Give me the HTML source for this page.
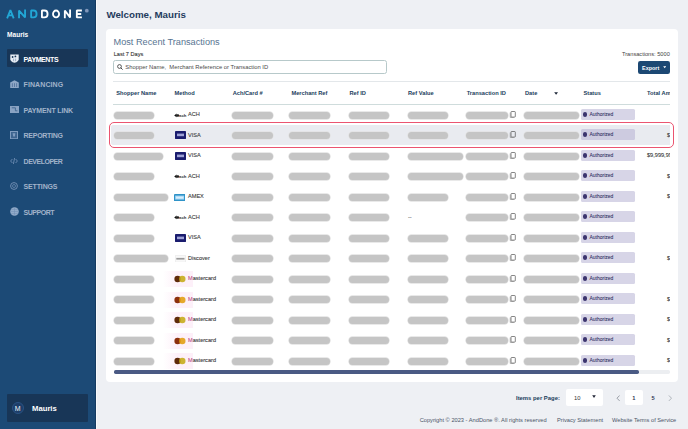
<!DOCTYPE html>
<html><head><meta charset="utf-8">
<style>
*{margin:0;padding:0;box-sizing:border-box}
html,body{width:688px;height:429px;overflow:hidden;background:#eef0f4;font-family:"Liberation Sans",sans-serif}
.a{position:absolute;white-space:pre;line-height:1}
#side{position:absolute;left:0;top:0;width:95.5px;height:429px;background:#1c4a76;border-right:1px solid #153b61}
#sidestrip{position:absolute;left:95.5px;top:0;width:1.8px;height:429px;background:#f9fafc}
.logo{position:absolute;left:6px;top:8.5px;font-size:12.2px;font-weight:bold;letter-spacing:2.8px;line-height:1;white-space:pre;-webkit-text-stroke:0.35px currentColor}
.logo .c{color:#23a8d8} .logo .w{color:#ffffff}
.reg{position:absolute;left:85px;top:9px;width:4px;height:4px;border-radius:50%;background:#7c93b8}
.nav{position:absolute;left:23.6px;font-size:7px;font-weight:bold;letter-spacing:-0.1px;line-height:1;white-space:pre;color:#a1b3ca}
.nav.act{color:#fff}
.navic{position:absolute;left:10px}
#act{position:absolute;left:7px;top:49px;width:81px;height:18.4px;background:#183657;border-radius:1px}
#user{position:absolute;left:6.8px;top:393.6px;width:81.4px;height:28px;background:#183657;border-radius:1px}
#card{position:absolute;left:105.5px;top:29px;width:572.3px;height:352.5px;background:#fff;border-radius:4px}
.pill{position:absolute;height:7px;border-radius:3.5px;background:#c5c5c5;box-shadow:0 0 0 0.7px #e2e2e2}
.ic{position:absolute}
.amt{color:#555;-webkit-text-stroke:0.15px #555}
.cell{position:absolute;font-size:5.6px;line-height:1;white-space:pre;color:#3a3a3a;-webkit-text-stroke:0.1px #3a3a3a}
.hdr{position:absolute;font-size:5.7px;font-weight:bold;line-height:1;white-space:pre;color:#213d5c;top:91.3px}
.badge{position:absolute;left:581.2px;width:54px;height:10.9px;background:#d7d5e7;border-radius:1.5px;font-size:5px;line-height:10.9px;color:#2f2c60;padding-left:8.3px;white-space:pre;-webkit-text-stroke:0.05px #2f2c60}
.badge.hl{background:#cdcbe0}
.dot{position:absolute;left:1.5px;top:3.1px;width:4.8px;height:4.8px;border-radius:50%;background:#3c356e}
#hlrow{position:absolute;left:111px;top:125px;width:561px;height:20px;background:#e9ebf0;border-radius:2px}
#redbox{position:absolute;left:108.8px;top:121.7px;width:565.2px;height:26.7px;border:1.85px solid #eb5470;border-radius:5px}
#clip{position:absolute;left:0;top:0;width:670px;height:429px;overflow:hidden}
.foot{position:absolute;font-size:5.7px;line-height:1;white-space:pre;color:#4a5568;top:417.6px}
</style></head><body>
<div id="side"></div>
<div id="sidestrip"></div>
<svg style="position:absolute;left:0;top:0" width="95" height="24" viewBox="0 0 95 24"><path d="M7.1 18.3 L10.4 10.00 L13.7 18.3 M8.4 15.3 H12.4 M19.03 18.3 V10.53 L25.07 17.38 V9.6 M31.12 10.53 V17.38 H33.55 Q36.58 17.38 36.58 13.95 Q36.58 10.53 33.55 10.53 Z" fill="none" stroke="#22a7d6" stroke-width="1.85" stroke-linejoin="bevel"/><path d="M41.92 10.53 V17.38 H44.45 Q47.58 17.38 47.58 13.95 Q47.58 10.53 44.45 10.53 Z M56.05 10.53 A3.03 3.42 0 1 0 56.05 17.38 A3.03 3.42 0 1 0 56.05 10.53 Z M64.83 18.3 V10.53 L70.08 17.38 V9.6 M81.9 10.53 H76.83 V17.38 H81.9 M76.83 13.95 H81.2" fill="none" stroke="#ffffff" stroke-width="1.85" stroke-linejoin="bevel"/><circle cx="86.8" cy="10.7" r="1.9" fill="#8097bb"/></svg>
<div class="a" style="left:7px;top:32px;font-size:6.6px;font-weight:bold;color:#fff">Mauris</div>
<div id="act"></div>
<svg class="navic" style="left:9.7px;top:53.7px" width="9" height="9" viewBox="0 0 9 9"><path d="M0.3 0.4 H8.7 V5.2 Q8.7 7.6 4.5 8.8 Q0.3 7.6 0.3 5.2 Z" fill="#e6ecf4"/><circle cx="2.6" cy="3" r="0.9" fill="#183657"/><circle cx="5.4" cy="2.4" r="0.9" fill="#183657"/><path d="M3.6 4.6 V7.2 M5.6 4.6 V7.2" stroke="#8097b5" stroke-width="0.7"/></svg>
<div class="nav act" style="top:55.9px;letter-spacing:-0.39px">PAYMENTS</div>
<svg class="navic" style="left:9.7px;top:80px" width="9" height="8.2" viewBox="0 0 9 8.2"><path d="M0.2 2.4 L4.5 0.2 L8.8 2.4 V8 H0.2 Z" fill="#8ea7c6"/><path d="M2.4 3.2 V7 M4.5 3.2 V7 M6.6 3.2 V7" stroke="#4c6f98" stroke-width="0.8"/></svg>
<div class="nav" style="top:80.9px;letter-spacing:0.08px">FINANCING</div>
<svg class="navic" style="left:9.7px;top:105.9px" width="9" height="7" viewBox="0 0 9 7"><rect x="0" y="0" width="9" height="7" fill="#89a3c3"/><path d="M1.8 1.8 H5.4 V4.8 H7.4" fill="none" stroke="#3f6690" stroke-width="0.9"/></svg>
<div class="nav" style="top:106.9px;letter-spacing:-0.16px">PAYMENT LINK</div>
<svg class="navic" style="left:10.1px;top:131px" width="8" height="8.2" viewBox="0 0 8 8.2"><rect x="0.5" y="0.5" width="7" height="7.2" fill="#3e6590" stroke="#7f9cbf" stroke-width="1"/><path d="M2.6 2.2 H5.4 L4.9 5.4 H3.2 Z" fill="#7f9cbf"/></svg>
<div class="nav" style="top:132.0px;letter-spacing:-0.28px">REPORTING</div>
<svg class="navic" style="left:10.1px;top:156.7px" width="8" height="8" viewBox="0 0 8 8"><path d="M2.4 2 L0.6 4 L2.4 6 M5.6 2 L7.4 4 L5.6 6 M4.6 1 L3.4 7" fill="none" stroke="#6f8db3" stroke-width="0.9"/></svg>
<div class="nav" style="top:157.8px;letter-spacing:-0.5px">DEVELOPER</div>
<svg class="navic" style="left:10.3px;top:182px" width="8" height="8" viewBox="0 0 8 8"><circle cx="4" cy="4" r="3.4" fill="none" stroke="#7994b8" stroke-width="0.9"/><circle cx="4" cy="4" r="1.5" fill="none" stroke="#6a88ae" stroke-width="0.8"/></svg>
<div class="nav" style="top:183.0px;letter-spacing:-0.16px">SETTINGS</div>
<svg class="navic" style="left:9.7px;top:207px" width="9" height="9" viewBox="0 0 9 9"><circle cx="4.5" cy="4.5" r="4.3" fill="#92abc9"/><path d="M0.4 4.5 H8.6 M4.5 0.3 V8.7 M1.2 2.4 H7.8 M1.2 6.6 H7.8" stroke="#6f8db3" stroke-width="0.5"/></svg>
<div class="nav" style="top:208.6px;letter-spacing:-0.48px">SUPPORT</div>
<div id="user"></div>
<div style="position:absolute;left:11.5px;top:401.9px;width:12.2px;height:12.2px;border-radius:50%;background:#1d3e69;border:1px solid #2a5384;color:#f4f7fb;font-size:7px;line-height:11.2px;text-align:center">M</div>
<div class="a" style="left:32px;top:404.6px;font-size:7.7px;font-weight:bold;color:#fff">Mauris</div>

<div class="a" style="left:106.4px;top:9.6px;font-size:9.75px;font-weight:bold;color:#1f3c5d">Welcome, Mauris</div>
<div id="card"></div>
<div class="a" style="left:113.5px;top:38.1px;font-size:9.2px;color:#587491">Most Recent Transactions</div>
<div class="a" style="left:113.7px;top:51.5px;font-size:5.6px;color:#333;-webkit-text-stroke:0.1px #333">Last 7 Days</div>
<div class="a" style="left:622px;top:52.1px;font-size:5.65px;color:#444">Transactions: 5000</div>
<div style="position:absolute;left:113.3px;top:60px;width:273.4px;height:14px;border:1px solid #b7c9ca;border-radius:2.5px"></div>
<svg class="ic" style="left:117px;top:64.3px" width="6" height="6" viewBox="0 0 6 6"><circle cx="2.5" cy="2.5" r="1.9" fill="none" stroke="#333" stroke-width="0.8"/><path d="M3.8 3.8 L5.6 5.6" stroke="#333" stroke-width="0.9"/></svg>
<div class="a" style="left:125.3px;top:65.1px;font-size:5.83px;color:#4a4a4a">Shopper Name,  Merchant Reference or Transaction ID</div>
<div style="position:absolute;left:637.6px;top:60.5px;width:32.2px;height:13.3px;background:#1c4873;border-radius:2.2px"></div>
<div class="a" style="left:642px;top:65.6px;font-size:5.45px;font-weight:bold;color:#fff">Export</div>
<svg class="ic" style="left:662.6px;top:66.1px" width="3.4" height="2.6" viewBox="0 0 3.4 2.6"><path d="M0.2 0.3 H3.2 L1.7 2.2 Z" fill="#fff"/></svg>
<div style="position:absolute;left:113px;top:80.8px;width:557px;height:0.8px;background:#e3e7ea"></div>
<div style="position:absolute;left:113px;top:104.2px;width:557px;height:0.9px;background:#cfdcdc"></div>
<div class="hdr" style="left:116.3px">Shopper Name</div>
<div class="hdr" style="left:174.5px">Method</div>
<div class="hdr" style="left:232.7px">Ach/Card #</div>
<div class="hdr" style="left:291.4px">Merchant Ref</div>
<div class="hdr" style="left:349.5px">Ref ID</div>
<div class="hdr" style="left:408px">Ref Value</div>
<div class="hdr" style="left:466.7px">Transaction ID</div>
<div class="hdr" style="left:525px">Date</div>
<svg class="ic" style="left:553.6px;top:91.5px" width="4.2" height="3" viewBox="0 0 4.2 3"><path d="M0.2 0.2 H4 L2.1 2.7 Z" fill="#1b2636"/></svg>
<div class="hdr" style="left:583.5px">Status</div>
<div id="clip">
<div class="hdr" style="left:647px">Total Amount</div>
<div id="hlrow"></div>
<div class="pill" style="left:114px;top:111.90px;width:40px"></div>
<svg class="ic" style="left:174px;top:112.60px" width="13" height="5" viewBox="0 0 13 5"><path d="M0.2 2.4 L2.6 0.6 L2.6 4.2 Z" fill="#111"/><rect x="2.2" y="1.2" width="3" height="2.6" rx="1.2" fill="#222"/><text x="5" y="4.1" font-size="3.6" font-weight="bold" fill="#333" font-family="Liberation Sans" textLength="7.4" lengthAdjust="spacingAndGlyphs">ach</text></svg>
<div class="cell" style="left:188px;top:112.40px">ACH</div>
<div class="pill" style="left:232px;top:111.90px;width:41px"></div>
<div class="pill" style="left:289px;top:111.90px;width:41px"></div>
<div class="pill" style="left:348.6px;top:111.90px;width:40.6px"></div>
<div class="pill" style="left:408px;top:111.90px;width:40px"></div>
<div class="pill" style="left:466px;top:111.90px;width:42px"></div>
<svg class="ic" style="left:509.2px;top:110.80px" width="7" height="7" viewBox="0 0 7 7"><rect x="2" y="0.5" width="4.3" height="5.6" rx="0.7" fill="none" stroke="#444" stroke-width="0.65"/><path d="M1.2 1.6 V6.5 H4.8" fill="none" stroke="#777" stroke-width="0.5"/></svg>
<div class="pill" style="left:524px;top:111.90px;width:54.5px"></div>
<div class="badge" style="top:108.90px"><span class="dot"></span>Authorized</div><div class="pill" style="left:114px;top:132.40px;width:40px"></div>
<svg class="ic" style="left:174.6px;top:131.40px" width="11" height="8" viewBox="0 0 11 8"><rect width="11" height="8" rx="0.4" fill="#1a1c6e"/><rect x="2" y="2.6" width="7" height="2.6" fill="#9ea2d6"/></svg>
<div class="cell" style="left:188px;top:132.90px">VISA</div>
<div class="pill" style="left:232px;top:132.40px;width:41px"></div>
<div class="pill" style="left:289px;top:132.40px;width:41px"></div>
<div class="pill" style="left:348.6px;top:132.40px;width:40.6px"></div>
<div class="pill" style="left:408px;top:132.40px;width:40px"></div>
<div class="pill" style="left:466px;top:132.40px;width:42px"></div>
<svg class="ic" style="left:509.2px;top:131.30px" width="7" height="7" viewBox="0 0 7 7"><rect x="2" y="0.5" width="4.3" height="5.6" rx="0.7" fill="none" stroke="#444" stroke-width="0.65"/><path d="M1.2 1.6 V6.5 H4.8" fill="none" stroke="#777" stroke-width="0.5"/></svg>
<div class="pill" style="left:524px;top:132.40px;width:54.5px"></div>
<div class="badge hl" style="top:129.40px"><span class="dot"></span>Authorized</div>
<div class="cell amt" style="left:667px;top:132.85px">$</div><div class="pill" style="left:114px;top:152.90px;width:49px"></div>
<svg class="ic" style="left:174.6px;top:151.90px" width="11" height="8" viewBox="0 0 11 8"><rect width="11" height="8" rx="0.4" fill="#1a1c6e"/><rect x="2" y="2.6" width="7" height="2.6" fill="#9ea2d6"/></svg>
<div class="cell" style="left:188px;top:153.40px">VISA</div>
<div class="pill" style="left:232px;top:152.90px;width:41px"></div>
<div class="pill" style="left:289px;top:152.90px;width:41px"></div>
<div class="pill" style="left:348.6px;top:152.90px;width:40.6px"></div>
<div class="pill" style="left:408px;top:152.90px;width:55px"></div>
<div class="pill" style="left:466px;top:152.90px;width:42px"></div>
<svg class="ic" style="left:509.2px;top:151.80px" width="7" height="7" viewBox="0 0 7 7"><rect x="2" y="0.5" width="4.3" height="5.6" rx="0.7" fill="none" stroke="#444" stroke-width="0.65"/><path d="M1.2 1.6 V6.5 H4.8" fill="none" stroke="#777" stroke-width="0.5"/></svg>
<div class="pill" style="left:524px;top:152.90px;width:54.5px"></div>
<div class="badge" style="top:149.90px"><span class="dot"></span>Authorized</div>
<div class="cell amt" style="left:647px;top:153.35px">$9,999,999.99</div><div class="pill" style="left:114px;top:173.40px;width:40px"></div>
<svg class="ic" style="left:174px;top:174.10px" width="13" height="5" viewBox="0 0 13 5"><path d="M0.2 2.4 L2.6 0.6 L2.6 4.2 Z" fill="#111"/><rect x="2.2" y="1.2" width="3" height="2.6" rx="1.2" fill="#222"/><text x="5" y="4.1" font-size="3.6" font-weight="bold" fill="#333" font-family="Liberation Sans" textLength="7.4" lengthAdjust="spacingAndGlyphs">ach</text></svg>
<div class="cell" style="left:188px;top:173.90px">ACH</div>
<div class="pill" style="left:232px;top:173.40px;width:41px"></div>
<div class="pill" style="left:289px;top:173.40px;width:41px"></div>
<div class="pill" style="left:348.6px;top:173.40px;width:40.6px"></div>
<div class="pill" style="left:408px;top:173.40px;width:55px"></div>
<div class="pill" style="left:466px;top:173.40px;width:42px"></div>
<svg class="ic" style="left:509.2px;top:172.30px" width="7" height="7" viewBox="0 0 7 7"><rect x="2" y="0.5" width="4.3" height="5.6" rx="0.7" fill="none" stroke="#444" stroke-width="0.65"/><path d="M1.2 1.6 V6.5 H4.8" fill="none" stroke="#777" stroke-width="0.5"/></svg>
<div class="pill" style="left:524px;top:173.40px;width:54.5px"></div>
<div class="badge" style="top:170.40px"><span class="dot"></span>Authorized</div>
<div class="cell amt" style="left:667px;top:173.85px">$</div><div class="pill" style="left:114px;top:193.90px;width:54px"></div>
<svg class="ic" style="left:174.3px;top:193.50px" width="11.2" height="7.2" viewBox="0 0 11.2 7.2"><rect width="11.2" height="7.2" rx="0.5" fill="#2f93c8"/><rect x="1.1" y="1.6" width="9" height="4" fill="#9fd3f3"/><rect x="2" y="2.6" width="7.4" height="2" fill="#d8eefc"/></svg>
<div class="cell" style="left:188px;top:194.40px">AMEX</div>
<div class="pill" style="left:232px;top:193.90px;width:41px"></div>
<div class="pill" style="left:289px;top:193.90px;width:41px"></div>
<div class="pill" style="left:348.6px;top:193.90px;width:40.6px"></div>
<div class="pill" style="left:408px;top:193.90px;width:40px"></div>
<div class="pill" style="left:466px;top:193.90px;width:42px"></div>
<svg class="ic" style="left:509.2px;top:192.80px" width="7" height="7" viewBox="0 0 7 7"><rect x="2" y="0.5" width="4.3" height="5.6" rx="0.7" fill="none" stroke="#444" stroke-width="0.65"/><path d="M1.2 1.6 V6.5 H4.8" fill="none" stroke="#777" stroke-width="0.5"/></svg>
<div class="pill" style="left:524px;top:193.90px;width:54.5px"></div>
<div class="badge" style="top:190.90px"><span class="dot"></span>Authorized</div>
<div class="cell amt" style="left:667px;top:194.35px">$</div><div class="pill" style="left:114px;top:214.40px;width:40px"></div>
<svg class="ic" style="left:174px;top:215.10px" width="13" height="5" viewBox="0 0 13 5"><path d="M0.2 2.4 L2.6 0.6 L2.6 4.2 Z" fill="#111"/><rect x="2.2" y="1.2" width="3" height="2.6" rx="1.2" fill="#222"/><text x="5" y="4.1" font-size="3.6" font-weight="bold" fill="#333" font-family="Liberation Sans" textLength="7.4" lengthAdjust="spacingAndGlyphs">ach</text></svg>
<div class="cell" style="left:188px;top:214.90px">ACH</div>
<div class="pill" style="left:232px;top:214.40px;width:41px"></div>
<div class="pill" style="left:289px;top:214.40px;width:41px"></div>
<div class="pill" style="left:348.6px;top:214.40px;width:40.6px"></div>
<div class="cell" style="left:408px;top:214.90px">--</div>
<div class="pill" style="left:466px;top:214.40px;width:42px"></div>
<svg class="ic" style="left:509.2px;top:213.30px" width="7" height="7" viewBox="0 0 7 7"><rect x="2" y="0.5" width="4.3" height="5.6" rx="0.7" fill="none" stroke="#444" stroke-width="0.65"/><path d="M1.2 1.6 V6.5 H4.8" fill="none" stroke="#777" stroke-width="0.5"/></svg>
<div class="pill" style="left:524px;top:214.40px;width:54.5px"></div>
<div class="badge" style="top:211.40px"><span class="dot"></span>Authorized</div><div class="pill" style="left:114px;top:234.90px;width:40px"></div>
<svg class="ic" style="left:174.6px;top:233.90px" width="11" height="8" viewBox="0 0 11 8"><rect width="11" height="8" rx="0.4" fill="#1a1c6e"/><rect x="2" y="2.6" width="7" height="2.6" fill="#9ea2d6"/></svg>
<div class="cell" style="left:188px;top:235.40px">VISA</div>
<div class="pill" style="left:232px;top:234.90px;width:41px"></div>
<div class="pill" style="left:289px;top:234.90px;width:41px"></div>
<div class="pill" style="left:348.6px;top:234.90px;width:40.6px"></div>
<div class="pill" style="left:408px;top:234.90px;width:40px"></div>
<div class="pill" style="left:466px;top:234.90px;width:42px"></div>
<svg class="ic" style="left:509.2px;top:233.80px" width="7" height="7" viewBox="0 0 7 7"><rect x="2" y="0.5" width="4.3" height="5.6" rx="0.7" fill="none" stroke="#444" stroke-width="0.65"/><path d="M1.2 1.6 V6.5 H4.8" fill="none" stroke="#777" stroke-width="0.5"/></svg>
<div class="pill" style="left:524px;top:234.90px;width:54.5px"></div>
<div class="badge" style="top:231.90px"><span class="dot"></span>Authorized</div><div class="pill" style="left:114px;top:255.40px;width:54px"></div>
<svg class="ic" style="left:174.8px;top:254.50px" width="11" height="7.6" viewBox="0 0 11 7.6"><rect x="0.3" y="0.3" width="10.4" height="7" rx="0.6" fill="#f8f8f8" stroke="#e2e2e2" stroke-width="0.6"/><rect x="1.3" y="2.9" width="8.2" height="1.7" fill="#9a9a9a"/></svg>
<div class="cell" style="left:188px;top:255.90px">Discover</div>
<div class="pill" style="left:232px;top:255.40px;width:41px"></div>
<div class="pill" style="left:289px;top:255.40px;width:41px"></div>
<div class="pill" style="left:348.6px;top:255.40px;width:40.6px"></div>
<div class="pill" style="left:408px;top:255.40px;width:40px"></div>
<div class="pill" style="left:466px;top:255.40px;width:42px"></div>
<svg class="ic" style="left:509.2px;top:254.30px" width="7" height="7" viewBox="0 0 7 7"><rect x="2" y="0.5" width="4.3" height="5.6" rx="0.7" fill="none" stroke="#444" stroke-width="0.65"/><path d="M1.2 1.6 V6.5 H4.8" fill="none" stroke="#777" stroke-width="0.5"/></svg>
<div class="pill" style="left:524px;top:255.40px;width:54.5px"></div>
<div class="badge" style="top:252.40px"><span class="dot"></span>Authorized</div>
<div class="cell amt" style="left:667px;top:255.85px">$</div><div class="pill" style="left:114px;top:275.90px;width:40px"></div>
<div style="position:absolute;left:163px;top:271.10px;width:30px;height:16px;background:linear-gradient(90deg,rgba(253,242,250,0) 0%,rgba(253,240,249,0.8) 40%,#fdf0f9 50%,#fdf0f9 100%)"></div><svg class="ic" style="left:174px;top:275.10px" width="13" height="8" viewBox="0 0 13 8"><circle cx="3.6" cy="4" r="3.2" fill="#5e2a0a"/><circle cx="8.3" cy="4" r="3.2" fill="#c6ac1c" opacity="0.9"/></svg>
<div class="cell" style="left:188px;top:276.40px"><span style="color:#c0508a;-webkit-text-stroke:0.1px #c0508a">M</span>astercard</div>
<div class="pill" style="left:232px;top:275.90px;width:41px"></div>
<div class="pill" style="left:289px;top:275.90px;width:41px"></div>
<div class="pill" style="left:348.6px;top:275.90px;width:40.6px"></div>
<div class="pill" style="left:408px;top:275.90px;width:40px"></div>
<div class="pill" style="left:466px;top:275.90px;width:42px"></div>
<svg class="ic" style="left:509.2px;top:274.80px" width="7" height="7" viewBox="0 0 7 7"><rect x="2" y="0.5" width="4.3" height="5.6" rx="0.7" fill="none" stroke="#444" stroke-width="0.65"/><path d="M1.2 1.6 V6.5 H4.8" fill="none" stroke="#777" stroke-width="0.5"/></svg>
<div class="pill" style="left:524px;top:275.90px;width:54.5px"></div>
<div class="badge" style="top:272.90px"><span class="dot"></span>Authorized</div><div class="pill" style="left:114px;top:296.40px;width:40px"></div>
<div style="position:absolute;left:163px;top:291.60px;width:30px;height:16px;background:linear-gradient(90deg,rgba(253,242,250,0) 0%,rgba(253,240,249,0.8) 40%,#fdf0f9 50%,#fdf0f9 100%)"></div><svg class="ic" style="left:174px;top:295.60px" width="13" height="8" viewBox="0 0 13 8"><circle cx="3.6" cy="4" r="3.2" fill="#8c300e"/><circle cx="8.3" cy="4" r="3.2" fill="#e2a014" opacity="0.9"/></svg>
<div class="cell" style="left:188px;top:296.90px"><span style="color:#c0508a;-webkit-text-stroke:0.1px #c0508a">M</span>astercard</div>
<div class="pill" style="left:232px;top:296.40px;width:41px"></div>
<div class="pill" style="left:289px;top:296.40px;width:41px"></div>
<div class="pill" style="left:348.6px;top:296.40px;width:40.6px"></div>
<div class="pill" style="left:408px;top:296.40px;width:40px"></div>
<div class="pill" style="left:466px;top:296.40px;width:42px"></div>
<svg class="ic" style="left:509.2px;top:295.30px" width="7" height="7" viewBox="0 0 7 7"><rect x="2" y="0.5" width="4.3" height="5.6" rx="0.7" fill="none" stroke="#444" stroke-width="0.65"/><path d="M1.2 1.6 V6.5 H4.8" fill="none" stroke="#777" stroke-width="0.5"/></svg>
<div class="pill" style="left:524px;top:296.40px;width:54.5px"></div>
<div class="badge" style="top:293.40px"><span class="dot"></span>Authorized</div>
<div class="cell amt" style="left:667px;top:296.85px">$</div><div class="pill" style="left:114px;top:316.90px;width:40px"></div>
<div style="position:absolute;left:163px;top:312.10px;width:30px;height:16px;background:linear-gradient(90deg,rgba(253,242,250,0) 0%,rgba(253,240,249,0.8) 40%,#fdf0f9 50%,#fdf0f9 100%)"></div><svg class="ic" style="left:174px;top:316.10px" width="13" height="8" viewBox="0 0 13 8"><circle cx="3.6" cy="4" r="3.2" fill="#5e2a0a"/><circle cx="8.3" cy="4" r="3.2" fill="#c6ac1c" opacity="0.9"/></svg>
<div class="cell" style="left:188px;top:317.40px"><span style="color:#c0508a;-webkit-text-stroke:0.1px #c0508a">M</span>astercard</div>
<div class="pill" style="left:232px;top:316.90px;width:41px"></div>
<div class="pill" style="left:289px;top:316.90px;width:41px"></div>
<div class="pill" style="left:348.6px;top:316.90px;width:40.6px"></div>
<div class="pill" style="left:408px;top:316.90px;width:40px"></div>
<div class="pill" style="left:466px;top:316.90px;width:42px"></div>
<svg class="ic" style="left:509.2px;top:315.80px" width="7" height="7" viewBox="0 0 7 7"><rect x="2" y="0.5" width="4.3" height="5.6" rx="0.7" fill="none" stroke="#444" stroke-width="0.65"/><path d="M1.2 1.6 V6.5 H4.8" fill="none" stroke="#777" stroke-width="0.5"/></svg>
<div class="pill" style="left:524px;top:316.90px;width:54.5px"></div>
<div class="badge" style="top:313.90px"><span class="dot"></span>Authorized</div>
<div class="cell amt" style="left:667px;top:317.35px">$</div><div class="pill" style="left:114px;top:337.40px;width:40px"></div>
<div style="position:absolute;left:163px;top:332.60px;width:30px;height:16px;background:linear-gradient(90deg,rgba(253,242,250,0) 0%,rgba(253,240,249,0.8) 40%,#fdf0f9 50%,#fdf0f9 100%)"></div><svg class="ic" style="left:174px;top:336.60px" width="13" height="8" viewBox="0 0 13 8"><circle cx="3.6" cy="4" r="3.2" fill="#8c300e"/><circle cx="8.3" cy="4" r="3.2" fill="#e2a014" opacity="0.9"/></svg>
<div class="cell" style="left:188px;top:337.90px"><span style="color:#c0508a;-webkit-text-stroke:0.1px #c0508a">M</span>astercard</div>
<div class="pill" style="left:232px;top:337.40px;width:41px"></div>
<div class="pill" style="left:289px;top:337.40px;width:41px"></div>
<div class="pill" style="left:348.6px;top:337.40px;width:40.6px"></div>
<div class="pill" style="left:408px;top:337.40px;width:40px"></div>
<div class="pill" style="left:466px;top:337.40px;width:42px"></div>
<svg class="ic" style="left:509.2px;top:336.30px" width="7" height="7" viewBox="0 0 7 7"><rect x="2" y="0.5" width="4.3" height="5.6" rx="0.7" fill="none" stroke="#444" stroke-width="0.65"/><path d="M1.2 1.6 V6.5 H4.8" fill="none" stroke="#777" stroke-width="0.5"/></svg>
<div class="pill" style="left:524px;top:337.40px;width:54.5px"></div>
<div class="badge" style="top:334.40px"><span class="dot"></span>Authorized</div>
<div class="cell amt" style="left:667px;top:337.85px">$</div><div class="pill" style="left:114px;top:357.90px;width:40px"></div>
<div style="position:absolute;left:163px;top:353.10px;width:30px;height:16px;background:linear-gradient(90deg,rgba(253,242,250,0) 0%,rgba(253,240,249,0.8) 40%,#fdf0f9 50%,#fdf0f9 100%)"></div><svg class="ic" style="left:174px;top:357.10px" width="13" height="8" viewBox="0 0 13 8"><circle cx="3.6" cy="4" r="3.2" fill="#5e2a0a"/><circle cx="8.3" cy="4" r="3.2" fill="#c6ac1c" opacity="0.9"/></svg>
<div class="cell" style="left:188px;top:358.40px"><span style="color:#c0508a;-webkit-text-stroke:0.1px #c0508a">M</span>astercard</div>
<div class="pill" style="left:232px;top:357.90px;width:41px"></div>
<div class="pill" style="left:289px;top:357.90px;width:41px"></div>
<div class="pill" style="left:348.6px;top:357.90px;width:40.6px"></div>
<div class="pill" style="left:408px;top:357.90px;width:40px"></div>
<div class="pill" style="left:466px;top:357.90px;width:42px"></div>
<svg class="ic" style="left:509.2px;top:356.80px" width="7" height="7" viewBox="0 0 7 7"><rect x="2" y="0.5" width="4.3" height="5.6" rx="0.7" fill="none" stroke="#444" stroke-width="0.65"/><path d="M1.2 1.6 V6.5 H4.8" fill="none" stroke="#777" stroke-width="0.5"/></svg>
<div class="pill" style="left:524px;top:357.90px;width:54.5px"></div>
<div class="badge" style="top:354.90px"><span class="dot"></span>Authorized</div>
<div class="cell amt" style="left:667px;top:358.35px">$</div>
<div style="position:absolute;left:113.5px;top:370.2px;width:556.5px;height:3.4px;background:#eceef1;border-radius:1.7px"></div>
<div style="position:absolute;left:113.5px;top:370.2px;width:525px;height:3.4px;background:#4a5a84;border-radius:1.7px"></div>
</div>
<div id="redbox"></div>

<div class="a" style="left:516px;top:395.5px;font-size:5.9px;font-weight:bold;color:#213d5c">Items per Page:</div>
<div style="position:absolute;left:565.8px;top:388.5px;width:36.8px;height:17.6px;background:#fff;border-radius:2px"></div>
<div class="a" style="left:574px;top:396.1px;font-size:5.8px;color:#333">10</div>
<svg class="ic" style="left:591.8px;top:395px" width="4" height="3.4" viewBox="0 0 4 3.4"><path d="M0.2 0.3 H3.8 L2 3 Z" fill="#1e2233"/></svg>
<svg class="ic" style="left:615.5px;top:394.5px" width="4.5" height="6.4" viewBox="0 0 4.5 6.4"><path d="M3.6 0.5 L1 3.2 L3.6 5.9" fill="none" stroke="#8a8f98" stroke-width="0.85"/></svg>
<div style="position:absolute;left:625.2px;top:389.9px;width:17.4px;height:15.3px;background:#fff;border-radius:2px"></div>
<div class="a" style="left:632.3px;top:395.9px;font-size:5.7px;font-weight:bold;color:#343a58">1</div>
<div class="a" style="left:651.6px;top:395.9px;font-size:5.7px;font-weight:bold;color:#343a58">5</div>
<svg class="ic" style="left:667.8px;top:394.5px" width="4.5" height="6.4" viewBox="0 0 4.5 6.4"><path d="M0.9 0.5 L3.5 3.2 L0.9 5.9" fill="none" stroke="#a0a4ac" stroke-width="0.8"/></svg>
<div class="foot" style="left:419.7px">Copyright © 2023 - AndDone ®. All rights reserved</div>
<div class="foot" style="left:557px">Privacy Statement</div>
<div class="foot" style="left:612px">Website Terms of Service</div>
</body></html>
